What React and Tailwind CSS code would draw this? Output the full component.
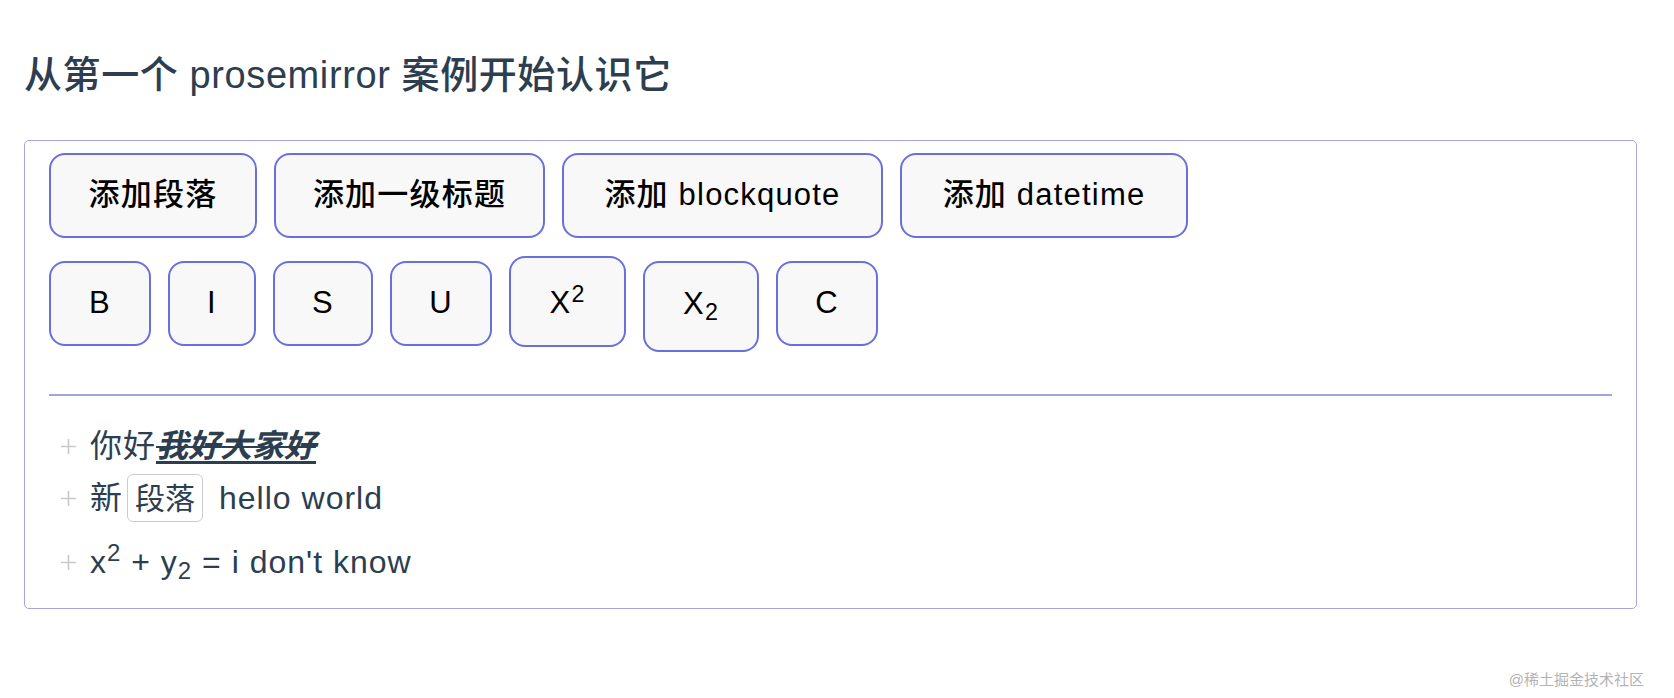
import React from 'react';

const font = { fontFamily: '"Liberation Sans", "Noto Sans CJK SC", sans-serif' };

function Btn({ w, className = '', children }) {
  return (
    <button
      className={`h-[85px] ${w} shrink-0 rounded-[16px] border-2 border-[#6a6fdb] bg-[#f8f8f9] text-[31px] font-medium tracking-[1.2px] text-black flex items-center justify-center ${className}`}
    >
      {children}
    </button>
  );
}

function Plus() {
  return (
    <svg className="w-[15px] h-[15px] shrink-0" viewBox="0 0 15 15" fill="none" stroke="#c9c9c9" strokeWidth="1.6">
      <path d="M7.5 0v15M0 7.5h15" />
    </svg>
  );
}

export default function App() {
  return (
    <div className="relative h-[698px] w-full bg-white px-[24px] text-[#2c3e50]" style={font}>
      <h2 className="pt-[51px] text-[38px] leading-[48px] font-medium tracking-[0.6px] text-[#2c3e50]">
        从第一个 prosemirror 案例开始认识它
      </h2>

      <div className="mt-[41px] w-[1613px] rounded-[5px] border-[1.5px] border-[#a4a5e3] pl-[24px] pr-[24px] pt-[12px] pb-[14px]">
        <div className="flex gap-[17px]">
          <Btn w="w-[208px]">添加段落</Btn>
          <Btn w="w-[271px]">添加一级标题</Btn>
          <Btn w="w-[321px]">添加 blockquote</Btn>
          <Btn w="w-[288px]">添加 datetime</Btn>
        </div>

        <div className="mt-[18px] flex items-start gap-[17px] h-[96px]">
          <Btn w="w-[102px]" className="mt-[5px]">B</Btn>
          <Btn w="w-[88px]" className="mt-[5px]">I</Btn>
          <Btn w="w-[100px]" className="mt-[5px]">S</Btn>
          <Btn w="w-[102px]" className="mt-[5px]">U</Btn>
          <Btn w="w-[117px]" className="h-[91px]">
            <span className="pt-[4px]">X<sup>2</sup></span>
          </Btn>
          <Btn w="w-[116px]" className="mt-[5px] h-[91px]">
            <span className="pb-[4px]">X<sub>2</sub></span>
          </Btn>
          <Btn w="w-[102px]" className="mt-[5px]">C</Btn>
        </div>

        <div className="mt-[42px] h-[2px] bg-[#a3a3df]" />

        <div className="mt-[26px] text-[32px] tracking-[1px] text-[#2c3e50]">
          <div className="flex h-[48px] items-center pl-[12px]">
            <Plus />
            <span className="ml-[14px]">
              你好
              <span className="font-bold italic tracking-normal underline decoration-[3px] underline-offset-[4px]">
                <span className="line-through decoration-[2px]">我好大家好</span>
              </span>
            </span>
          </div>

          <div className="mt-[4px] flex h-[48px] items-center pl-[12px]">
            <Plus />
            <span className="ml-[14px]">新</span>
            <span className="ml-[4px] flex h-[48px] items-center rounded-[6px] border border-[#cccccc] px-[7px] text-[30px] tracking-normal">
              段落
            </span>
            <span className="ml-[16px]">hello world</span>
          </div>

          <div className="mt-[8px] flex h-[64px] items-center pl-[12px]">
            <Plus />
            <span className="ml-[14px]">
              x<sup>2</sup> + y<sub>2</sub> = i don't know
            </span>
          </div>
        </div>
      </div>

      <div className="absolute right-[30px] top-[670px] text-[15px] leading-[20px] text-[#b3b3b3]">
        @稀土掘金技术社区
      </div>
    </div>
  );
}
